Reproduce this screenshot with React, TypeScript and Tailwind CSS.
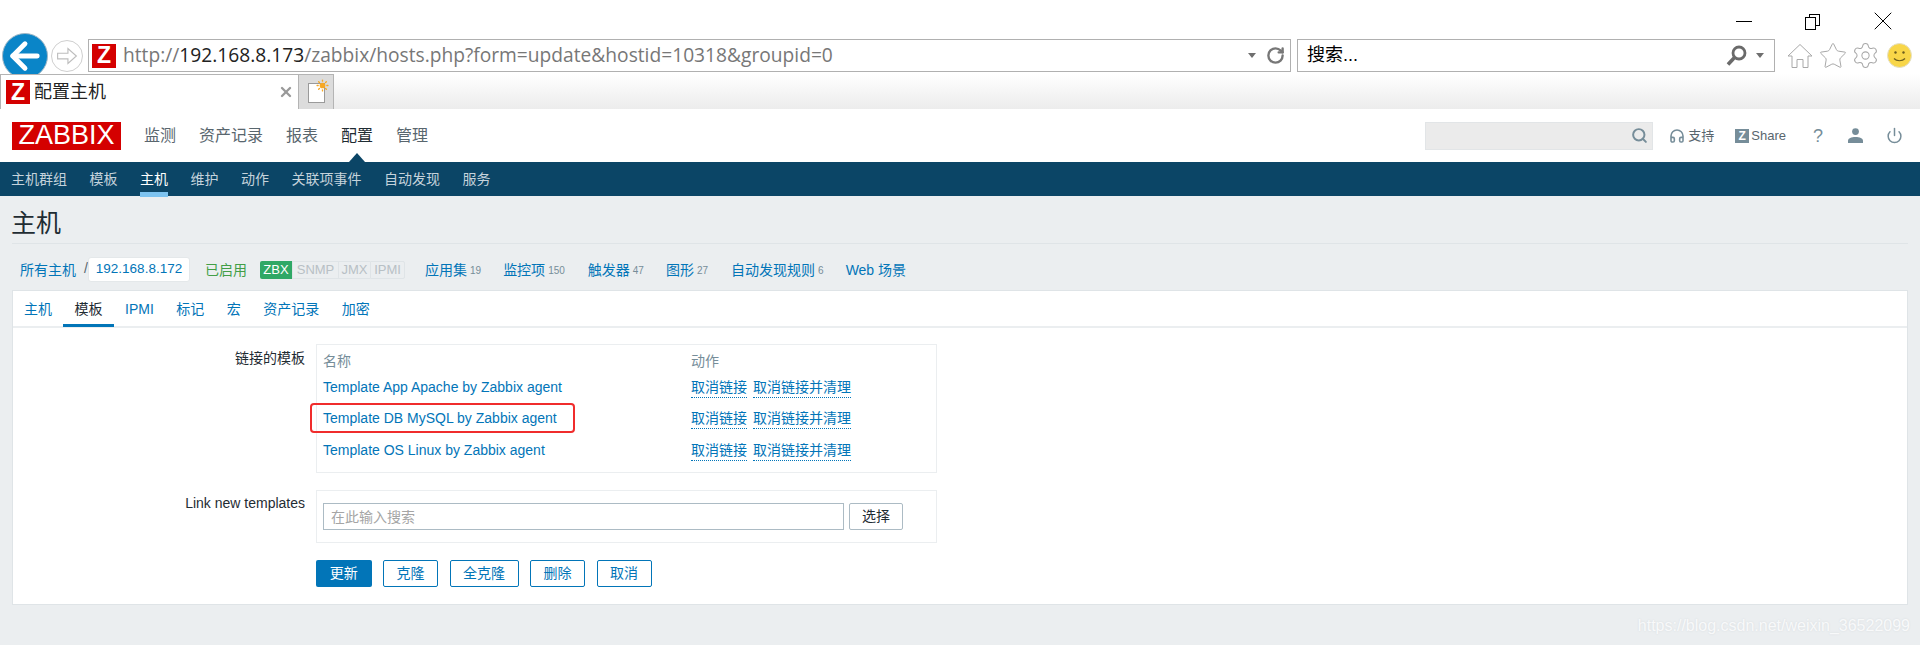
import { ArrowLeft, RotateCw, Search, Star, Settings, Sun, X, Headphones, Power } from "lucide-react";

const SANS = "font-['Liberation_Sans','Noto_Sans_CJK_SC',sans-serif]";

function Favicon() {
  return (
    <span className="flex h-[24px] w-[24px] shrink-0 items-center justify-center bg-[#d40000] font-['Liberation_Sans',sans-serif] text-[23px] font-bold leading-none text-white">
      Z
    </span>
  );
}

function Caret() {
  return <span className="h-0 w-0 border-x-[4.5px] border-t-[5px] border-x-transparent border-t-[#6f6f6f]" />;
}

function BrowserChrome() {
  return (
    <div className="bg-white">
      <div className="flex h-[39px] items-start justify-end">
        <div className="mr-[53px] mt-[21px] h-px w-[16px] bg-black" />
        <div className="relative mr-[47px] mt-[14px] h-[16px] w-[15px]">
          <div className="absolute right-0 top-0 h-[12px] w-[11px] border border-black" />
          <div className="absolute bottom-0 left-0 h-[13px] w-[11px] border border-black bg-white" />
        </div>
        <X className="mr-[21px] mt-[5px] size-[32px] text-black" strokeWidth={0.75} />
      </div>
      <div className="flex h-[33px] items-center">
        <div className="relative z-0 ml-[2px] flex h-[46px] w-[46px] shrink-0 items-center justify-center rounded-full border border-[#9fb7c6] bg-[#0a85c8]">
          <ArrowLeft className="size-[42px] text-white" strokeWidth={2.8} />
        </div>
        <div className="ml-[3px] flex h-[32px] w-[32px] shrink-0 items-center justify-center rounded-full border border-[#cfcfcf]">
          <svg viewBox="0 0 32 32" className="size-[30px]" fill="none" stroke="#bdbdbd" strokeWidth="1.2">
            <path d="M6 13h11V8l9 8-9 8v-5H6z" />
          </svg>
        </div>
        <div className="ml-[5px] flex h-[33px] w-[1203px] items-center border border-[#b0b0b0] pl-[3px]">
          <Favicon />
          <span className="ml-[7px] whitespace-nowrap font-['Open_Sans',sans-serif] text-[19.2px] text-[#777]">
            http://<span className="text-[#222]">192.168.8.173</span>/zabbix/hosts.php?form=update&amp;hostid=10318&amp;groupid=0
          </span>
          <div className="ml-auto mr-[5px] flex items-center gap-[10px]">
            <Caret />
            <RotateCw className="size-[19px] text-[#777]" strokeWidth={3} />
          </div>
        </div>
        <div className="ml-[6px] flex h-[33px] w-[478px] items-center border border-[#b0b0b0] pl-[9px]">
          <span className={`${SANS} text-[18px] text-black`}>搜索...</span>
          <div className="ml-auto mr-[10px] flex items-center gap-[9px]">
            <svg viewBox="0 0 21 21" className="size-[21px]" fill="none" stroke="#6a6a6a">
              <circle cx="13" cy="8" r="6" strokeWidth="2.8" />
              <path d="M8.5 12.5 2 19.5" strokeWidth="3.6" />
            </svg>
            <Caret />
          </div>
        </div>
        <div className="ml-[12px] flex items-center">
          <svg viewBox="0 0 26 26" className="size-[26px]" fill="none" stroke="#a8a8a8" strokeWidth="1">
            <path d="M13 1.5 25 13h-4v11.5h-5v-8h-6v8H5V13H1z" />
          </svg>
          <Star className="ml-[4.5px] size-[30px] text-[#a8a8a8]" strokeWidth={0.8} />
          <Settings className="ml-[3.5px] size-[29px] text-[#a8a8a8]" strokeWidth={0.85} />
          <svg viewBox="0 0 25 25" className="ml-[7px] size-[25px]" fill="none">
            <circle cx="12.5" cy="12.5" r="12" fill="#f8d648" stroke="#e4e0c8" />
            <circle cx="8.5" cy="9.5" r="1.2" fill="#6b5d1e" />
            <circle cx="16.5" cy="9.5" r="1.2" fill="#6b5d1e" />
            <path d="M7 15.5c2.5 3 8.5 3 11 0" stroke="#6b5d1e" strokeWidth="1.2" />
          </svg>
        </div>
      </div>
      <div className="relative z-10 mt-[2px] flex h-[35px] bg-gradient-to-b from-white to-[#ececec]">
        <div className="flex w-[299px] items-center border-x border-t border-[#b4b4b4] bg-white pl-[5px]">
          <Favicon />
          <span className={`${SANS} ml-[4px] text-[18px] text-[#222]`}>配置主机</span>
          <X className="ml-auto mr-[4px] size-[16px] text-[#999]" strokeWidth={3.5} />
        </div>
        <div className="relative w-[35px] border-r border-t border-[#b4b4b4] bg-[#dcdcdc]">
          <div className="absolute left-[9px] top-[8px] h-[20px] w-[17px] border border-[#9a9a9a] bg-white" />
          <Sun className="absolute left-[17px] top-[4px] size-[13px] fill-[#f7a823] text-[#f7a823]" strokeWidth={2.5} />
        </div>
      </div>
    </div>
  );
}

function TopNav() {
  const items = ["监测", "资产记录", "报表", "配置", "管理"];
  return (
    <div className="relative flex h-[53px] items-center bg-white pl-[12px]">
      <div className="flex h-[28px] w-[109px] items-center justify-center bg-[#d40000] font-['Liberation_Sans',sans-serif] text-[27px] leading-none text-white">
        ZABBIX
      </div>
      <div className="ml-[23px] flex gap-[23px]">
        {items.map((item) => (
          <span key={item} className={`${SANS} text-[16px] ${item === "配置" ? "text-[#1f2c33]" : "text-[#59666e]"}`}>
            {item}
          </span>
        ))}
      </div>
      <div className="absolute bottom-0 left-[349px] h-0 w-0 border-x-[8px] border-b-[9px] border-x-transparent border-b-[#0b4566]" />
      <div className="ml-auto flex items-center">
        <div className="flex h-[28px] w-[228px] items-center justify-end border border-[#e2e5e7] bg-[#ebebeb] pr-[4px]">
          <Search className="size-[17px] text-[#768d99]" strokeWidth={2.8} />
        </div>
        <Headphones className="ml-[16px] size-[16px] text-[#768d99]" strokeWidth={2.4} />
        <span className={`${SANS} ml-[3px] text-[13px] text-[#59666e]`}>支持</span>
        <span className="ml-[21px] flex h-[14px] w-[14px] items-center justify-center bg-[#768d99] font-['Liberation_Sans',sans-serif] text-[12px] font-bold leading-none text-white">
          Z
        </span>
        <span className={`${SANS} ml-[2px] text-[13px] text-[#59666e]`}>Share</span>
        <span className={`${SANS} ml-[27px] text-[18px] leading-none text-[#768d99]`}>?</span>
        <svg viewBox="0 0 15 15" className="ml-[25px] size-[15px]" fill="#768d99">
          <circle cx="7.5" cy="3.6" r="3.4" />
          <path d="M0 15v-2.2C0 10.2 3.4 9 7.5 9s7.5 1.200 7.500 3.800V15z" />
        </svg>
        <Power className="ml-[23px] mr-[17px] size-[17px] text-[#768d99]" strokeWidth={2.1} />
      </div>
    </div>
  );
}

function SubNav() {
  const items = ["主机群组", "模板", "主机", "维护", "动作", "关联项事件", "自动发现", "服务"];
  return (
    <div className="flex h-[34px] items-center gap-[22.5px] bg-[#0b4566] pl-[11px]">
      {items.map((item) => (
        <span key={item} className={`${SANS} relative text-[14px] leading-[34px] ${item === "主机" ? "text-white" : "text-[#c5d3dc]"}`}>
          {item}
          {item === "主机" && <span className="absolute bottom-[-1px] left-0 h-[5px] w-full bg-[#7dc3f0]" />}
        </span>
      ))}
    </div>
  );
}

function HostBar() {
  const links: [string, string, number][] = [
    ["应用集", "19", 20],
    ["监控项", "150", 22],
    ["触发器", "47", 23],
    ["图形", "27", 22],
    ["自动发现规则", "6", 23],
  ];
  return (
    <div className={`${SANS} flex h-[25px] items-center pl-[8px] pt-[2px] text-[14px] text-[#0275b8]`}>
      <span>所有主机</span>
      <span className="ml-[8px] w-[4px] pb-[4px] text-[#59666e]">/</span>
      <span className="-mt-[2px] flex h-[25px] w-[102px] items-center justify-center rounded-[3px] border border-[#e4e8ea] bg-white text-[13.5px]">192.168.8.172</span>
      <span className="ml-[15px] text-[#429e47]">已启用</span>
      <div className="-mt-[2px] ml-[13px] flex h-[18px] text-[13px] leading-[18px] text-[#b8c0c5]">
        <span className="w-[32px] rounded-l-[2px] bg-[#2fa866] text-center text-white">ZBX</span>
        <span className="w-[46px] border-y border-l border-[#dfe4e7] text-center leading-[16px]">SNMP</span>
        <span className="w-[32px] border-y border-l border-[#dfe4e7] text-center leading-[16px]">JMX</span>
        <span className="w-[35px] rounded-r-[2px] border border-[#dfe4e7] text-center leading-[16px]">IPMI</span>
      </div>
      {links.map(([label, count, gap]) => (
        <span key={label} className="flex items-center" style={{ marginLeft: gap }}>
          {label}
          <span className="ml-[3px] text-[10px] text-[#768d99]">{count}</span>
        </span>
      ))}
      <span className="ml-[22px]">Web 场景</span>
    </div>
  );
}

function Tabs() {
  const items = ["主机", "模板", "IPMI", "标记", "宏", "资产记录", "加密"];
  return (
    <div className={`${SANS} flex h-[37px] gap-[22.5px] border-b-[2px] border-[#ebeef0] pl-[11px] text-[14px] text-[#0275b8]`}>
      {items.map((item) => (
        <span key={item} className={`relative leading-[37px] ${item === "模板" ? "text-[#1f2c33]" : ""}`}>
          {item}
          {item === "模板" && <span className="absolute bottom-[-1px] left-[-12px] right-[-11px] h-[3px] bg-[#0275b8]" />}
        </span>
      ))}
    </div>
  );
}

function TemplateTable() {
  const rows = [
    ["Template App Apache by Zabbix agent", "h-[32px]"],
    ["Template DB MySQL by Zabbix agent", "h-[31px]"],
    ["Template OS Linux by Zabbix agent", "h-[32px]"],
  ];
  return (
    <div className="h-[129px] w-[621px] border border-[#ebeef0] pl-[6px] pt-[6px]">
      <div className="flex h-[20px] items-center text-[14px] text-[#768d99]">
        <span className="w-[368px]">名称</span>
        <span>动作</span>
      </div>
      {rows.map(([name, height], i) => (
        <div key={name} className={`relative flex items-center ${height}`}>
          <span className="w-[368px] text-[#0275b8]">{name}</span>
          <span className="border-b border-dotted border-[#0275b8] leading-[20px] text-[#0275b8]">取消链接</span>
          <span className="ml-[6px] border-b border-dotted border-[#0275b8] leading-[20px] text-[#0275b8]">取消链接并清理</span>
          {i === 1 && <div className="absolute left-[-13px] top-[0px] h-[30px] w-[265px] rounded-[4px] border-2 border-[#f02c2c]" />}
        </div>
      ))}
    </div>
  );
}

function Form() {
  const buttons = [
    ["克隆", "w-[55px]"],
    ["全克隆", "w-[69px]"],
    ["删除", "w-[55px]"],
    ["取消", "w-[55px]"],
  ];
  return (
    <div className={`${SANS} mt-[16px] flex flex-col gap-[17px] text-[14px] text-[#1f2c33]`}>
      <div className="flex gap-[11px]">
        <div className="w-[292px] pt-[4px] text-right">链接的模板</div>
        <TemplateTable />
      </div>
      <div className="flex gap-[11px]">
        <div className="w-[292px] pt-[3px] text-right">Link new templates</div>
        <div className="flex h-[53px] w-[621px] items-center gap-[5px] border border-[#ebeef0] pl-[6px]">
          <div className="flex h-[27px] w-[521px] items-center border border-[#acbbc4] pl-[7px] pt-[1px] text-[#a5a5a5]">在此输入搜索</div>
          <div className="flex h-[27px] w-[54px] items-center justify-center rounded-[2px] border border-[#acbbc4] text-[#1f2c33]">选择</div>
        </div>
      </div>
      <div className="ml-[303px] flex gap-[11.5px]">
        <div className="flex h-[27px] w-[55.5px] items-center justify-center rounded-[2px] bg-[#0275b8] text-white">更新</div>
        {buttons.map(([label, width]) => (
          <div key={label} className={`flex h-[27px] items-center justify-center rounded-[2px] border border-[#0275b8] text-[#0275b8] ${width}`}>
            {label}
          </div>
        ))}
      </div>
    </div>
  );
}

export default function App() {
  return (
    <div className="relative h-[645px] w-[1920px] overflow-hidden bg-[#ebeef0]">
      <BrowserChrome />
      <TopNav />
      <SubNav />
      <div className="px-[12px]">
        <h1 className={`${SANS} flex h-[48px] items-center border-b border-[#dfe4e7] pt-[8px] text-[25px] font-normal text-[#1f2c33]`}>
          <span className="-ml-[1px]">主机</span>
        </h1>
        <div className="mt-[13px]">
          <HostBar />
        </div>
        <div className="mt-[8px] h-[315px] border border-[#dfe4e7] bg-white">
          <Tabs />
          <Form />
        </div>
      </div>
      <div className="absolute bottom-[11px] right-[10px] font-['Liberation_Sans',sans-serif] text-[16px] leading-none text-[#f8f9fa] [text-shadow:0_0_2px_#d5d9dc]">
        https://blog.csdn.net/weixin_36522099
      </div>
    </div>
  );
}
